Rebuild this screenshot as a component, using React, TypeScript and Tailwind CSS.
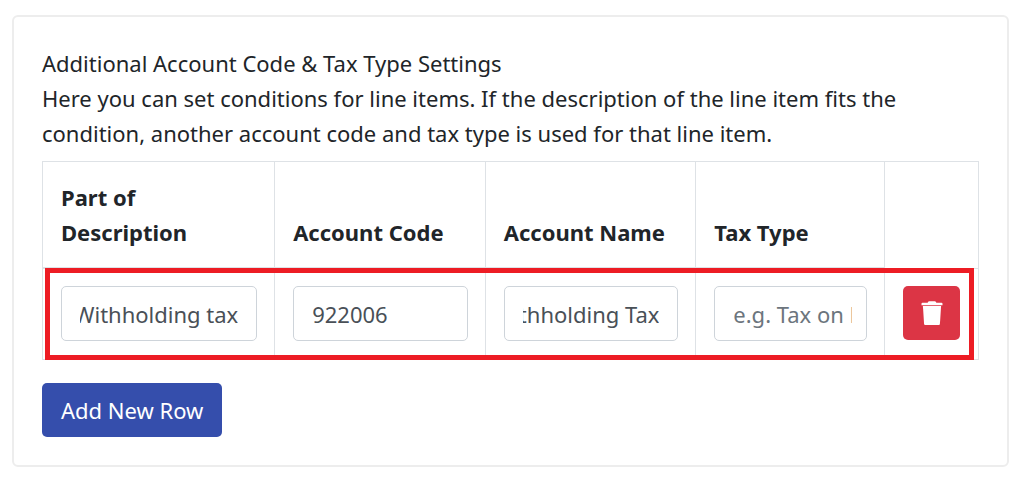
import React, { useEffect, useRef, useState } from 'react';

interface Row {
  id: number;
  description: string;
  accountCode: string;
  accountName: string;
  taxType: string;
}

interface CellInputProps {
  label: string;
  value: string;
  placeholder: string;
  onChange: (value: string) => void;
}

const initialRows: Row[] = [
  { id: 1, description: 'Withholding tax', accountCode: '922006', accountName: 'Withholding Tax', taxType: '' },
];

const TrashIcon: React.FC = () => (
  <svg viewBox="0 0 22 24" className="w-[22px] h-6" fill="currentColor" aria-hidden="true">
    <path d="M7 1Q7.4.2 8.2.2h5.6q.8 0 1.2.8l.3.7h5.2q1 0 1 1v1.5H.5V2.7q0-1 1-1h5.2z" />
    <path d="M1.9 5h18.2L18.9 23q-.1.9-1 .9H4.1q-.9 0-1-.9z" />
  </svg>
);

const CellInput: React.FC<CellInputProps> = ({ label, value, placeholder, onChange }) => {
  const ref = useRef<HTMLInputElement>(null);

  // keep the end of long values in view
  useEffect(() => {
    if (ref.current && value) ref.current.scrollLeft = ref.current.scrollWidth;
  }, [value]);

  return (
    <input
      ref={ref}
      type="text"
      aria-label={label}
      value={value}
      placeholder={placeholder}
      onChange={(e) => onChange(e.target.value)}
      className="block w-full h-[55px] pl-[18px] pr-[18px] placeholder-shown:pr-[14px] border border-[#ced4da] rounded-[5px] bg-white text-[#495057] placeholder:text-[#6c757d] outline-none"
    />
  );
};

const App: React.FC = () => {
  const [rows, setRows] = useState<Row[]>(initialRows);

  const update = (id: number, patch: Partial<Row>) => {
    setRows(rows.map((row) => (row.id === id ? { ...row, ...patch } : row)));
  };

  const addRow = () => {
    setRows([...rows, { id: Date.now(), description: '', accountCode: '', accountName: '', taxType: '' }]);
  };

  const th = 'border border-b-2 border-[#dee2e6] px-[18px] pt-[18px] pb-[17px] text-left align-bottom font-bold';
  const td = 'border border-[#dee2e6] pl-[18px] pr-[17px] pt-[17px] pb-[18px] align-top';

  return (
    <div className="min-h-screen bg-white pt-[15px] pb-3 pl-3 pr-[15px] font-['Noto_Sans',sans-serif] text-[22px] leading-[35px] text-[#212529]">
      <section className="border-2 border-[#ededed] rounded-md px-7 pt-[29px] pb-7">
        <h2>Additional Account Code &amp; Tax Type Settings</h2>
        <p className="mb-[10px]">
          Here you can set conditions for line items. If the description of the line item fits the condition, another
          account code and tax type is used for that line item.
        </p>

        <table className="w-full table-fixed border-collapse">
          <thead>
            <tr>
              <th className={`${th} w-[24.8%]`}>Part of Description</th>
              <th className={`${th} w-[22.5%]`}>Account Code</th>
              <th className={`${th} w-[22.5%]`}>Account Name</th>
              <th className={`${th} w-[20.2%]`}>Tax Type</th>
              <td className={td}></td>
            </tr>
          </thead>
          <tbody>
            {rows.map((row) => (
              <tr key={row.id} className="relative">
                <td className={td}>
                  <CellInput label="Part of Description" placeholder="e.g. Fee" value={row.description} onChange={(v) => update(row.id, { description: v })} />
                </td>
                <td className={td}>
                  <CellInput label="Account Code" placeholder="e.g. 200" value={row.accountCode} onChange={(v) => update(row.id, { accountCode: v })} />
                </td>
                <td className={td}>
                  <CellInput label="Account Name" placeholder="e.g. Sales" value={row.accountName} onChange={(v) => update(row.id, { accountName: v })} />
                </td>
                <td className={td}>
                  <CellInput label="Tax Type" placeholder="e.g. Tax on Purchases" value={row.taxType} onChange={(v) => update(row.id, { taxType: v })} />
                </td>
                <td className={td}>
                  <button
                    type="button"
                    aria-label="Delete row"
                    onClick={() => setRows(rows.filter((r) => r.id !== row.id))}
                    className="flex items-center justify-center w-[57px] h-[54px] rounded-[5px] bg-[#dc3545] text-white"
                  >
                    <TrashIcon />
                  </button>
                  <div className="absolute inset-y-0 left-[2px] right-[5px] border-5 border-[#ed1c24] pointer-events-none" />
                </td>
              </tr>
            ))}
          </tbody>
        </table>

        <button type="button" onClick={addRow} className="mt-[23px] h-[54px] px-[19px] rounded-[5px] bg-[#354eac] text-white">
          Add New Row
        </button>
      </section>
    </div>
  );
};

export default App;
